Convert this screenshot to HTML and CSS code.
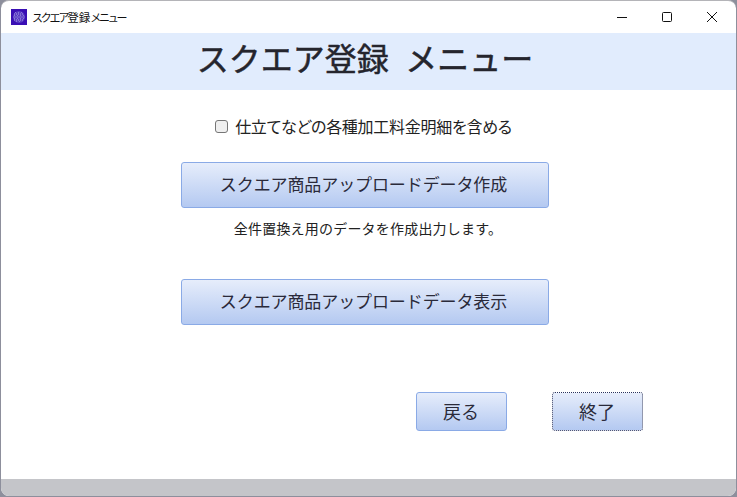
FILE: index.html
```html
<!DOCTYPE html>
<html lang="ja">
<head>
<meta charset="utf-8">
<title>スクエア登録メニュー</title>
<link rel="stylesheet" href="styles.css">
</head>
<body>
<div class="window">
  <div class="titlebar">
    <svg class="appicon" width="16" height="16" viewBox="0 0 16 16">
      <rect width="16" height="16" fill="#3a0fb4"/>
      <circle cx="8" cy="8" r="6" fill="#5a3cc4"/>
      <path d="M3 5h10M2.500 8h11M3 11h10" stroke="#a99ee2" stroke-width="1" stroke-dasharray="1 1" fill="none"/>
      <path d="M4 3.500h8M3 6.500h10M3 9.500h10M5 12.500h6" stroke="#8878d8" stroke-width="1" stroke-dasharray="1 2" fill="none"/>
    </svg>
    <span class="wintitle"><span class="kana">スクエア</span>登録<span class="kana">メニュー</span></span>
    <div class="controls">
      <svg width="12" height="12" viewBox="0 0 12 12"><path d="M1 6.5h10" stroke="#111" stroke-width="1"/></svg>
      <svg width="12" height="12" viewBox="0 0 12 12"><rect x="1.5" y="1.5" width="9" height="9" rx="1" fill="none" stroke="#111" stroke-width="1"/></svg>
      <svg width="12" height="12" viewBox="0 0 12 12"><path d="M1 1l10 10M11 1L1 11" stroke="#111" stroke-width="1"/></svg>
    </div>
  </div>
  <header class="banner"><h1>スクエア登録&nbsp;&nbsp;メニュー</h1></header>
  <main class="content">
    <label class="check"><input type="checkbox"><span>仕立てなどの各種加工料金明細を含める</span></label>
    <button class="btn wide">スクエア商品アップロードデータ作成</button>
    <p class="note">全件置換え用のデータを作成出力します。</p>
    <button class="btn wide second">スクエア商品アップロードデータ表示</button>
    <div class="actions">
      <button class="btn small">戻る</button>
      <button class="btn small focus">終了</button>
    </div>
  </main>
  <footer class="statusbar"></footer>
</div>
</body>
</html>
```
FILE: styles.css
```css
* { box-sizing: border-box; }
html, body { margin: 0; height: 100%; }
body {
  background: #8d8f9c;
  padding: 0 1px 1px;
  font-family: "Noto Sans CJK JP", "Liberation Sans", sans-serif;
  color: #222;
  overflow: hidden;
}
.window {
  height: 496px;
  display: flex;
  flex-direction: column;
  background: #fff;
  border-top: 1px solid #b4b4b8;
  border-radius: 8px;
  overflow: hidden;
}
.titlebar {
  height: 32px;
  display: flex;
  align-items: center;
  padding-left: 10px;
  flex: none;
}
.appicon { flex: none; }
.wintitle { font-size: 11.5px; margin-left: 5px; color: #111; white-space: nowrap; }
.kana { font-size: 11px; letter-spacing: -2.2px; }
.controls {
  margin-left: auto;
  display: flex;
  gap: 33px;
  padding-right: 18px;
}
.controls svg { display: block; }
.banner {
  height: 57px;
  flex: none;
  background: #e1ecfd;
  display: flex;
  justify-content: center;
  align-items: center;
  padding-right: 7px;
}
.banner h1 {
  margin: 0 0 10px;
  font-size: 32px;
  font-weight: 400;
  -webkit-text-stroke: 0.5px #25252d;
  line-height: 48px;
  word-spacing: 1px;
  color: #25252d;
  white-space: nowrap;
}
.content {
  flex: 1;
  display: flex;
  flex-direction: column;
  align-items: center;
  padding: 24px 7px 0 0;
}
.check {
  display: flex;
  align-items: center;
  height: 24px;
  margin-right: 3px;
  font-size: 16px;
  letter-spacing: -0.28px;
  color: #222;
  font-feature-settings: "palt";
}
.check input {
  appearance: none;
  width: 13px;
  height: 13px;
  margin: 1px 7px 0 0;
  background: #efefef;
  border: 1px solid #767676;
  border-radius: 3px;
}
.btn {
  font-family: inherit;
  color: #2a2a3a;
  background: linear-gradient(#e6edfb, #b4c9f1);
  border: 1px solid #8aaae6;
  border-radius: 3px;
  padding: 0;
}
.wide { width: 368px; height: 46px; font-size: 17px; margin-top: 24px; padding: 0 3px 3px 0; letter-spacing: -0.1px; }
.second { margin-top: 41px; }
.note { margin: 10px 0 0 6px; font-size: 14px; line-height: 20px; letter-spacing: 0.2px; color: #222; }
.actions {
  align-self: stretch;
  display: flex;
  justify-content: flex-end;
  gap: 45px;
  padding-right: 86px;
  margin-top: 67px;
}
.small { width: 91px; height: 39px; font-size: 18px; padding: 0 1px 2px 0; }
.focus { border: 1px dotted #27325f; background-clip: padding-box; }
.statusbar { height: 17px; flex: none; background: #c4c5c9; }
```
